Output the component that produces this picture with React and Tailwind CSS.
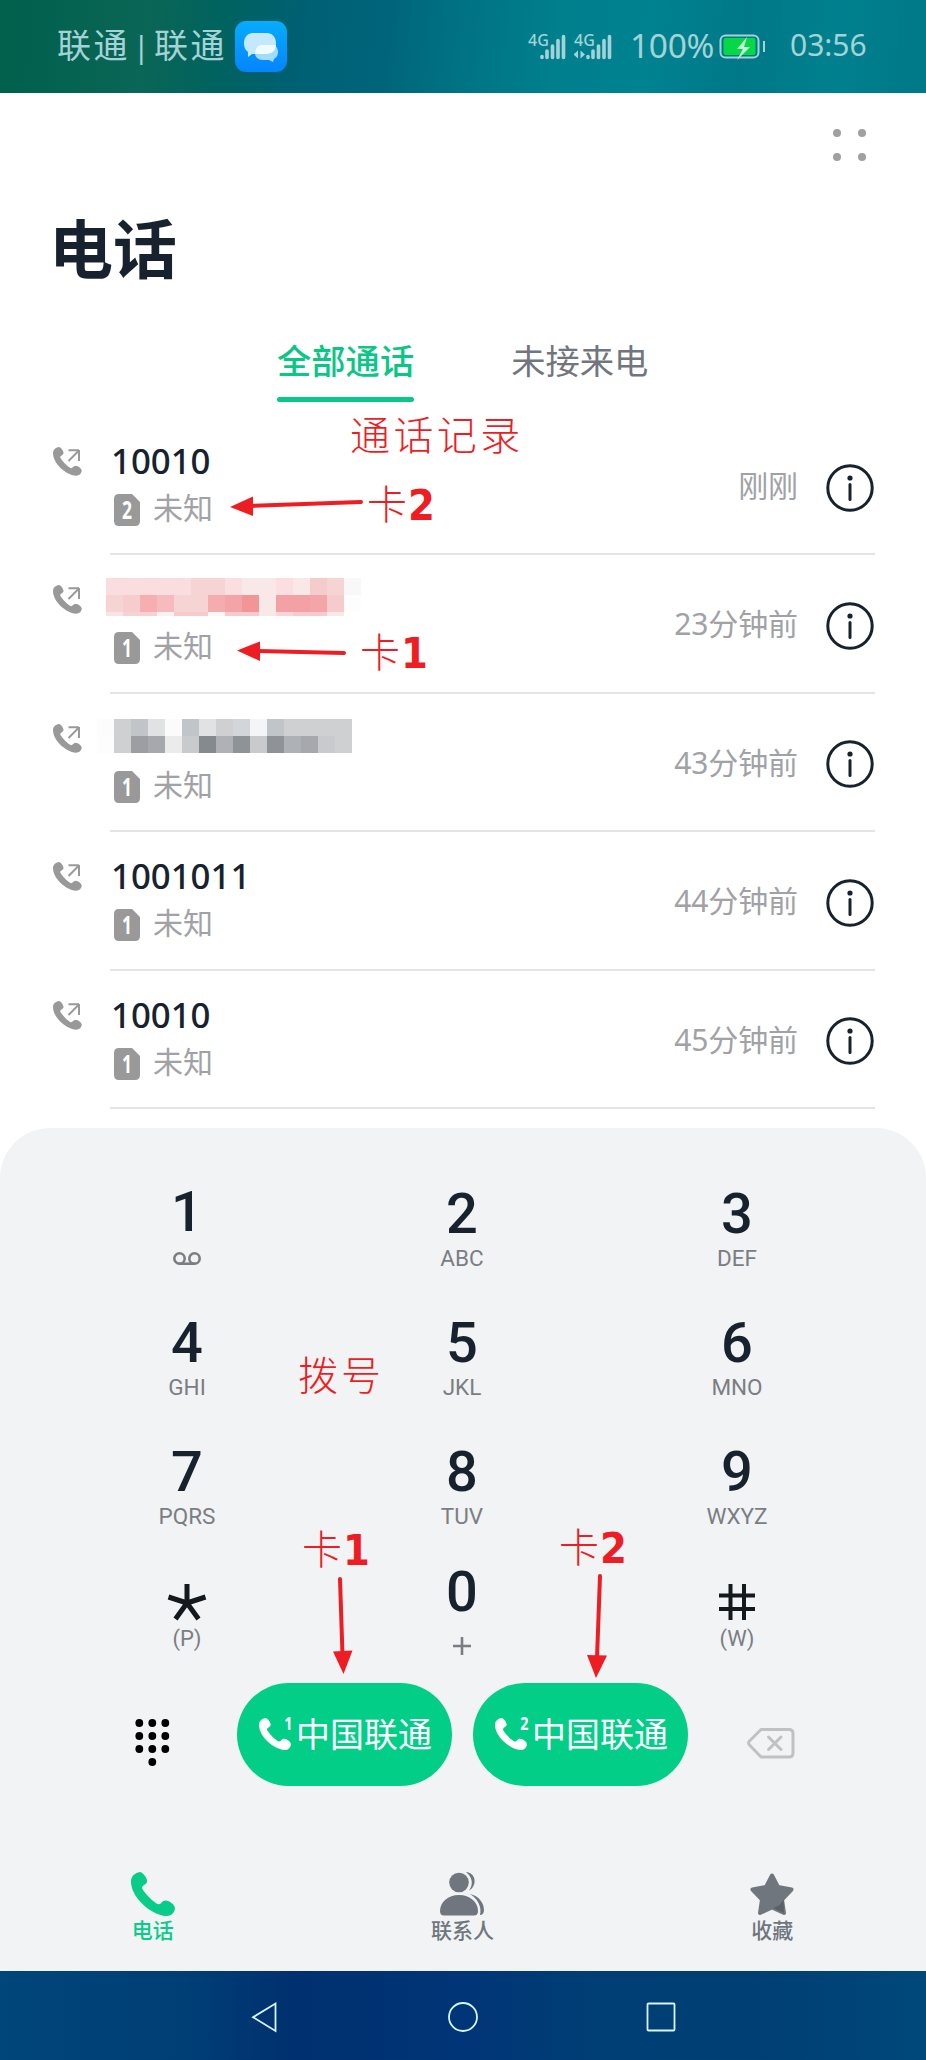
const HANDSET =
  "M0 7C0 3 3 .5 6.5 0C8.5 0 11.5 4 11.7 6.5C11.8 9 8 9.5 8 11.5C8.5 14 17 23 20 23.5C22 23.8 22.5 20.8 25 20.8C28 20.8 32 24 32 26.5C31.5 30 29 32 25.5 32C14 31 0 18 0 7Z";

const RED = [
  ["#fadedf", "#fadedf", "#fadedf", "#fadedf", "#fadedf", "#f5d4d3", "#f5d4d3", "#fadee0", "#f8e9e8", "#f8e9e8", "#fadee0", "#f8e9e8", "#f6cbcb", "#f5d4d3", "#f9f8f8"],
  ["#f5d4d3", "#f6cccd", "#f6aeb0", "#f7bbbe", "#f5d4d3", "#f5d4d3", "#f5acaf", "#f3a4a8", "#f39496", "#f8e9e8", "#f3a1a4", "#f3a1a4", "#f4a5a8", "#f6cbcd", "#fdfdfd"],
  ["#f8e4e4", "#f7d2d2", "#f7d2d2", "#f8f2f1", "#f6cbcd", "#f6cbcd", "#f8f8f8", "#f6cbcd", "#f6cbcd", "#f8e9e8", "#f7d6d6", "#f6cbcd", "#f6cbcd", "#f8e9e8", "#ffffff"],
];

const GRAY = [
  ["#fcfcfc", "#cfd0d2", "#c1c5c9", "#e0e2e4", "#fbfbfb", "#c0c5c9", "#e0e2e4", "#cfd0d2", "#d2d6db", "#f3f5f8", "#c0c5c9", "#cfd0d2", "#cfd0d2", "#cfd0d2", "#cfd0d2"],
  ["#fdfdfd", "#cfd0d2", "#9d9ea3", "#a6a8ad", "#ebebeb", "#c9cacc", "#858a8e", "#aeb1b5", "#8e9398", "#c9cacc", "#8e9398", "#aeb1b5", "#a6a8ad", "#c9cacc", "#cfd0d2"],
];

const calls = [
  { number: "10010", sim: 2, time: "刚刚" },
  { mosaic: RED, sim: 1, time: "23分钟前" },
  { mosaic: GRAY, sim: 1, time: "43分钟前" },
  { number: "1001011", sim: 1, time: "44分钟前" },
  { number: "10010", sim: 1, time: "45分钟前" },
];

const keys = [
  ["2", "ABC"], ["3", "DEF"], ["4", "GHI"], ["5", "JKL"], ["6", "MNO"],
  ["7", "PQRS"], ["8", "TUV"], ["9", "WXYZ"],
];

export default function App() {
  return (
    <div className="relative flex h-[2060px] w-[926px] flex-col overflow-hidden bg-white font-['Noto_Sans','Noto_Sans_CJK_SC',sans-serif] text-[#18222e]">
      <StatusBar />
      <header className="h-[235px] shrink-0 px-[53px]">
        <div className="flex justify-end pt-[36px] pr-[7px]">
          <div className="grid grid-cols-2 gap-x-[17px] gap-y-4">
            {[0, 1, 2, 3].map((i) => (
              <span key={i} className="size-2 rounded-full bg-[#a0a1a4]" />
            ))}
          </div>
        </div>
        <h1 className="mt-[56px] -ml-[4px] text-[64px] leading-none font-bold">电话</h1>
      </header>
      <nav className="flex h-[89px] shrink-0 gap-[97px] pl-[277px] text-[34.3px] leading-none">
        <div className="flex h-[74px] flex-col justify-between">
          <span className="pt-[16px] font-medium text-[#0ac785]">全部通话</span>
          <span className="h-[5px] w-[137px] rounded-full bg-[#0ac785]" />
        </div>
        <span className="pt-[16px] text-[#71767e]">未接来电</span>
      </nav>
      <main className="h-[711px] shrink-0">
        {calls.map((call, i) => (
          <CallRow key={i} {...call} />
        ))}
      </main>
      <Dialer />
      <SystemNav />
      <Notes />
    </div>
  );
}

function StatusBar() {
  return (
    <div className="flex h-[93px] shrink-0 items-start bg-[linear-gradient(97deg,#00604c_0%,#0a6656_16%,#00635f_24%,#006074_33%,#00657b_42%,#007384_50%,#007f8d_60%,#008290_70%,#007888_80%,#00808e_90%,#007888_100%)] pl-[57px] text-[#a3d3d6]">
      <span className="mt-[28px] w-[178px] text-[34px] leading-none whitespace-pre tracking-[2.5px]">联通<span className="mr-[2px] ml-[3px] text-[30px]">|</span>联通</span>
      <svg className="mt-[21px]" width="52" height="52" viewBox="0 0 52 52">
        <defs>
          <linearGradient id="chat" x1="0" y1="0" x2="0" y2="1">
            <stop offset="0" stopColor="#06adfd" />
            <stop offset="1" stopColor="#0584ff" />
          </linearGradient>
        </defs>
        <rect width="52" height="51" rx="11" fill="url(#chat)" />
        <path d="M18 12H32C37 12 41 16 41 22C41 29 37 33 31 33H17L13 36V31C10 29 9 26 9 22C9 16 13 12 18 12Z" fill="#c4e9ff" />
        <path d="M26 24H36C41 24 43 27 43 31C43 34 42 36 39 38L38 41L34 39H28C23 39 20 36 20 32C20 27 22 24 26 24Z" fill="#a1ddfb" />
        <path d="M26 24H41C41 29 37 33 31 33H20C20 28 22 24 26 24Z" fill="#effcff" />
      </svg>
      <div className="ml-[241px] flex">
        <Signal />
        <Signal data />
      </div>
      <span className="mt-[29px] ml-[10px] w-[89px] text-[33.5px] leading-none tracking-[-0.3px]">100%</span>
      <svg className="mt-[32px]" width="48" height="32" viewBox="0 0 48 32">
        <rect x="1.5" y="3.5" width="38" height="22" rx="5" fill="none" stroke="#a3d3d6" strokeWidth="2" />
        <rect x="4.5" y="6" width="32" height="17" rx="2" fill="#06d745" />
        <path d="M28 5L18 17H24L18 28L31 15H25L28 5Z" fill="#c5f3dc" />
        <path d="M45 9V20" stroke="#a3d3d6" strokeWidth="2" />
      </svg>
      <span className="mt-[30px] ml-[23px] text-[30px] leading-none">03:56</span>
    </div>
  );
}

function Signal({ data }) {
  return (
    <div className="relative mt-[32px] h-[30px] w-[46px]">
      <span className="absolute text-[16px] leading-none font-medium">4G</span>
      <svg width="46" height="30" viewBox="0 0 46 30" stroke="currentColor" strokeWidth="3.6" strokeLinecap="round">
        <path d="M14 24.5V25.5M19 19V25.5M24.5 14V25.5M30 8.500V25.5M35.500 4.500V25.5" />
        {data && <path d="M4 18.500L-.5 22.500L4 26.500ZM6.500 18.500L11 22.500L6.500 26.500Z" fill="currentColor" stroke="none" />}
      </svg>
    </div>
  );
}

function CallRow({ number, mosaic, sim, time }) {
  return (
    <div className="flex h-[138.4px] pl-[52px]">
      <svg className="mt-[30px] ml-[0.5px] shrink-0" width="30" height="30" viewBox="0 0 30 30">
        <path d={HANDSET} transform="scale(.9)" fill="#999" />
        <path d="M15.500 3.200H26M15.500 14L25.500 4M26 3V14" fill="none" stroke="#999" strokeWidth="2" />
      </svg>
      <div className="ml-[27.5px] flex w-[765px] justify-between border-b-2 border-[#e4e4e5]">
        <div className="pl-px">
          <div className="h-[77px] pt-[28px]">
            {number ? (
              <div className="-mt-px text-[34.800px] leading-none font-medium">{number}</div>
            ) : (
              <Mosaic rows={mosaic} red={mosaic === RED} />
            )}
          </div>
          <div className="flex text-[#a1a2a6]">
            <SimBadge n={sim} />
            <span className="-mt-px ml-[13px] text-[30px] leading-none">未知</span>
          </div>
        </div>
        <div className="flex h-[47px] translate-y-[47px] items-center">
          <span className="mr-[28px] mb-[3px] text-[30px] leading-none tracking-[-0.1px] text-[#a1a2a6]">{time}</span>
          <svg className="mr-[1px]" width="48" height="48" viewBox="0 0 48 48" fill="none" stroke="#18222c">
            <circle cx="24" cy="24" r="22.200" strokeWidth="3" />
            <path d="M24 20.500V35.500" strokeWidth="3" strokeLinecap="round" />
            <circle cx="24" cy="14" r="2.600" fill="#18222c" stroke="none" />
          </svg>
        </div>
      </div>
    </div>
  );
}

function Mosaic({ rows, red }) {
  return (
    <svg className={red ? "-mt-[5px] -ml-[5px]" : "-mt-[3px] -ml-[14px]"} width="255" height="38" shapeRendering="crispEdges">
      {rows.map((row, y) =>
        row.map((fill, x) => (
          <rect key={`${x}-${y}`} x={x * 17} y={y * 17} width="17" height={y === 2 ? 4 : 17} fill={fill} />
        ))
      )}
    </svg>
  );
}

function SimBadge({ n }) {
  return (
    <div className="relative ml-[3px] h-[32px] w-[26px]">
      <svg width="26" height="32" viewBox="0 0 26 32">
        <path d="M5 0H18L26 8V27Q26 32 21 32H5Q0 32 0 27V5Q0 0 5 0Z" fill="#999" />
      </svg>
      <span className="absolute inset-x-0 top-[3px] scale-x-70 text-center text-[25px] leading-none font-bold text-white">{n}</span>
    </div>
  );
}

function Key({ digit, children, className = "" }) {
  return (
    <div className={`flex flex-col items-center ${className}`}>
      <span className="text-[56px] leading-none font-medium">{digit}</span>
      <span className="mt-[5px] text-[22.5px] leading-none text-[#7a7e83]">{children}</span>
    </div>
  );
}

function Dialer() {
  return (
    <section className="flex h-[843px] shrink-0 flex-col rounded-t-[50px] bg-[#f1f3f5] pt-[58px]">
      <div className="ml-[49.5px] grid h-[497px] w-[825px] grid-cols-3 grid-rows-[129px_129px_120px_119px] font-[Roboto,sans-serif]">
        <Key digit="1" className="-mt-[2px]">
          <svg className="mt-[6px]" width="30" height="16" viewBox="0 0 30 16" fill="none" stroke="#7a7e83" strokeWidth="2.600">
            <circle cx="7.500" cy="7.500" r="5.200" />
            <circle cx="22.500" cy="7.500" r="5.200" />
            <path d="M7 12.700H23" />
          </svg>
        </Key>
        {keys.map(([digit, letters]) => (
          <Key key={digit} digit={digit}>{letters}</Key>
        ))}
        <div className="flex flex-col items-center pt-[19px]">
          <svg aria-label="*" width="40" height="38" viewBox="0 0 40 38" stroke="#14191e" strokeWidth="5">
            <path d="M20 20V1M20 20L1.500 14M20 20L38.500 14M20 20L8.500 36M20 20L31.500 36" />
          </svg>
          <span className="mt-[7px] text-[22px] leading-none text-[#7a7e83]">(P)</span>
        </div>
        <div className="flex flex-col items-center">
          <span className="text-[56px] leading-none font-medium">0</span>
          <svg className="mt-[17px]" width="18" height="18" viewBox="0 0 18 18" stroke="#7a7e83" strokeWidth="2.600">
            <path d="M9 0V18M0 9H18" />
          </svg>
        </div>
        <div className="flex flex-col items-center pt-[19px]">
          <svg aria-label="#" width="36" height="38" viewBox="0 0 36 38" stroke="#14191e" strokeWidth="4">
            <path d="M11.500 1V37M25 1V37M0 12.500H36M0 26H36" />
          </svg>
          <span className="mt-[7px] text-[22px] leading-none text-[#7a7e83]">(W)</span>
        </div>
      </div>
      <div className="flex h-[103px] items-center pl-[135px]">
        <svg className="mt-[16px]" width="35" height="48" viewBox="0 0 35 48">
          {[[4, 4], [17, 4], [30, 4], [4, 17], [17, 17], [30, 17], [4, 30], [17, 30], [30, 30], [17, 43]].map(([x, y]) => (
            <circle key={`${x}-${y}`} cx={x + 0.3} cy={y} r="3.900" />
          ))}
        </svg>
        <CallButton n={1} className="ml-[67px]" />
        <CallButton n={2} className="ml-[21px]" />
        <svg className="mt-[17px] ml-[58px]" width="50" height="32" viewBox="0 0 50 32" fill="none" stroke="#bfc1c3" strokeWidth="3" strokeLinejoin="round" strokeLinecap="round">
          <path d="M15 2.500H43Q47 2.500 47 6.500V26Q47 30 43 30H15L3.500 18Q1.500 16 3.500 14Z" />
          <path d="M22.500 10L35 22.500M35 10L22.500 22.500" />
        </svg>
      </div>
      <div className="mt-[86px] -ml-[2px] grid w-[929px] grid-cols-3 text-[21px] leading-none font-medium text-[#70767e]">
        <div className="flex flex-col items-center text-[#08cc88]">
          <svg width="44" height="44" viewBox="0 0 32 32"><path d={HANDSET} fill="currentColor" /></svg>
          <span className="mt-[4px]">电话</span>
        </div>
        <div className="flex flex-col items-center">
          <svg width="44" height="44" viewBox="0 0 44 44" fill="currentColor">
            <circle cx="19" cy="10.500" r="9.800" />
            <path d="M0 39C0 30 8 23 19 23C30 23 38 30 38 39C38 42 36.500 43.500 34 43.500H4C1.500 43.500 0 42 0 39Z" />
            <path d="M26 0C37 1 37 15 29 18.500C34 12 32 5 26 0ZM30 22C39 24 44 31 44 38C44 41 42.500 43 40 43C42 35 38 27 30 22Z" />
          </svg>
          <span className="mt-[4px]">联系人</span>
        </div>
        <div className="flex flex-col items-center">
          <svg width="44" height="44" viewBox="0 0 44 44" fill="currentColor" stroke="currentColor" strokeWidth="4" strokeLinejoin="round">
            <path d="M22 3.500L28 15L41.500 17.500L32 27.500L34 41L22 35.500L10 41L12 27.500L2.500 17.500L16 15Z" />
            <path d="M33.500 27C31 33 27 35 23 36L34 41Z" fill="#5a6068" stroke="none" />
          </svg>
          <span className="mt-[4px]">收藏</span>
        </div>
      </div>
    </section>
  );
}

function CallButton({ n, className }) {
  return (
    <button className={`flex h-[103px] w-[215px] items-center rounded-full bg-[#02ce88] pl-[22px] text-white ${className}`}>
      <svg width="33" height="33" viewBox="0 0 33 33"><path d={HANDSET} fill="currentColor" /></svg>
      <span className="-mt-[23px] -ml-[10px] w-[13px] scale-x-80 text-[18px] leading-none font-bold">{n}</span>
      <span className="mb-[2px] ml-px text-[34px] leading-none whitespace-nowrap">中国联通</span>
    </button>
  );
}

function SystemNav() {
  return (
    <div className="flex h-[89px] shrink-0 items-center justify-between bg-[linear-gradient(90deg,#00467a_0%,#003e76_20%,#00306f_32%,#003577_50%,#003f75_65%,#003f73_82%,#00487a_100%)] pt-[3px] pr-[250px] pl-[251px]">
      <svg width="26" height="32" viewBox="0 0 26 32" fill="none" stroke="#d7f5fb" strokeWidth="1.800">
        <path d="M24.500 2.500V30L2 16.200Z" />
      </svg>
      <svg className="ml-[2px]" width="32" height="32" fill="none" stroke="#d7f5fb" strokeWidth="1.800"><circle cx="16" cy="16" r="14" /></svg>
      <svg width="30" height="30" fill="none" stroke="#d7f5fb" strokeWidth="1.800"><rect x="1.500" y="1.500" width="27" height="27" rx="1" /></svg>
    </div>
  );
}

/* Red hand-placed notes lying over the screen */
function Notes() {
  return (
    <div className="absolute inset-0 text-[40px] leading-none font-light text-[#ee1d24]">
      <span className="absolute top-[415px] left-[350px] tracking-[3.4px] whitespace-nowrap">通话记录</span>
      <Note n={2} className="top-[484px] left-[367px]" />
      <Note n={1} className="top-[632px] left-[360px]" />
      <span className="absolute top-[1355px] left-[298px] tracking-[3px] whitespace-nowrap">拨号</span>
      <Note n={1} className="top-[1529px] left-[302px]" />
      <Note n={2} className="top-[1527px] left-[559px]" />
      <svg className="absolute inset-0" width="926" height="2060" fill="#ee1d24" stroke="#ee1d24" strokeWidth="4" strokeLinecap="round">
        <path d="M361 502L250 506M344 653L258 651M340 1579L342.500 1655M600 1576L597 1658" />
        <path d="M230 507L253 496.500V516ZM237 650.500L260 641.500V661ZM343.500 1674L333 1651.500L352.500 1650.500ZM596 1678L587 1655L607 1655.500Z" stroke="none" />
      </svg>
    </div>
  );
}

function Note({ n, className }) {
  return (
    <div className={`absolute flex whitespace-nowrap ${className}`}>
      卡<span className="ml-px inline-block origin-left scale-x-90 font-['DejaVu_Sans',sans-serif] text-[43px] leading-none font-bold">{n}</span>
    </div>
  );
}
